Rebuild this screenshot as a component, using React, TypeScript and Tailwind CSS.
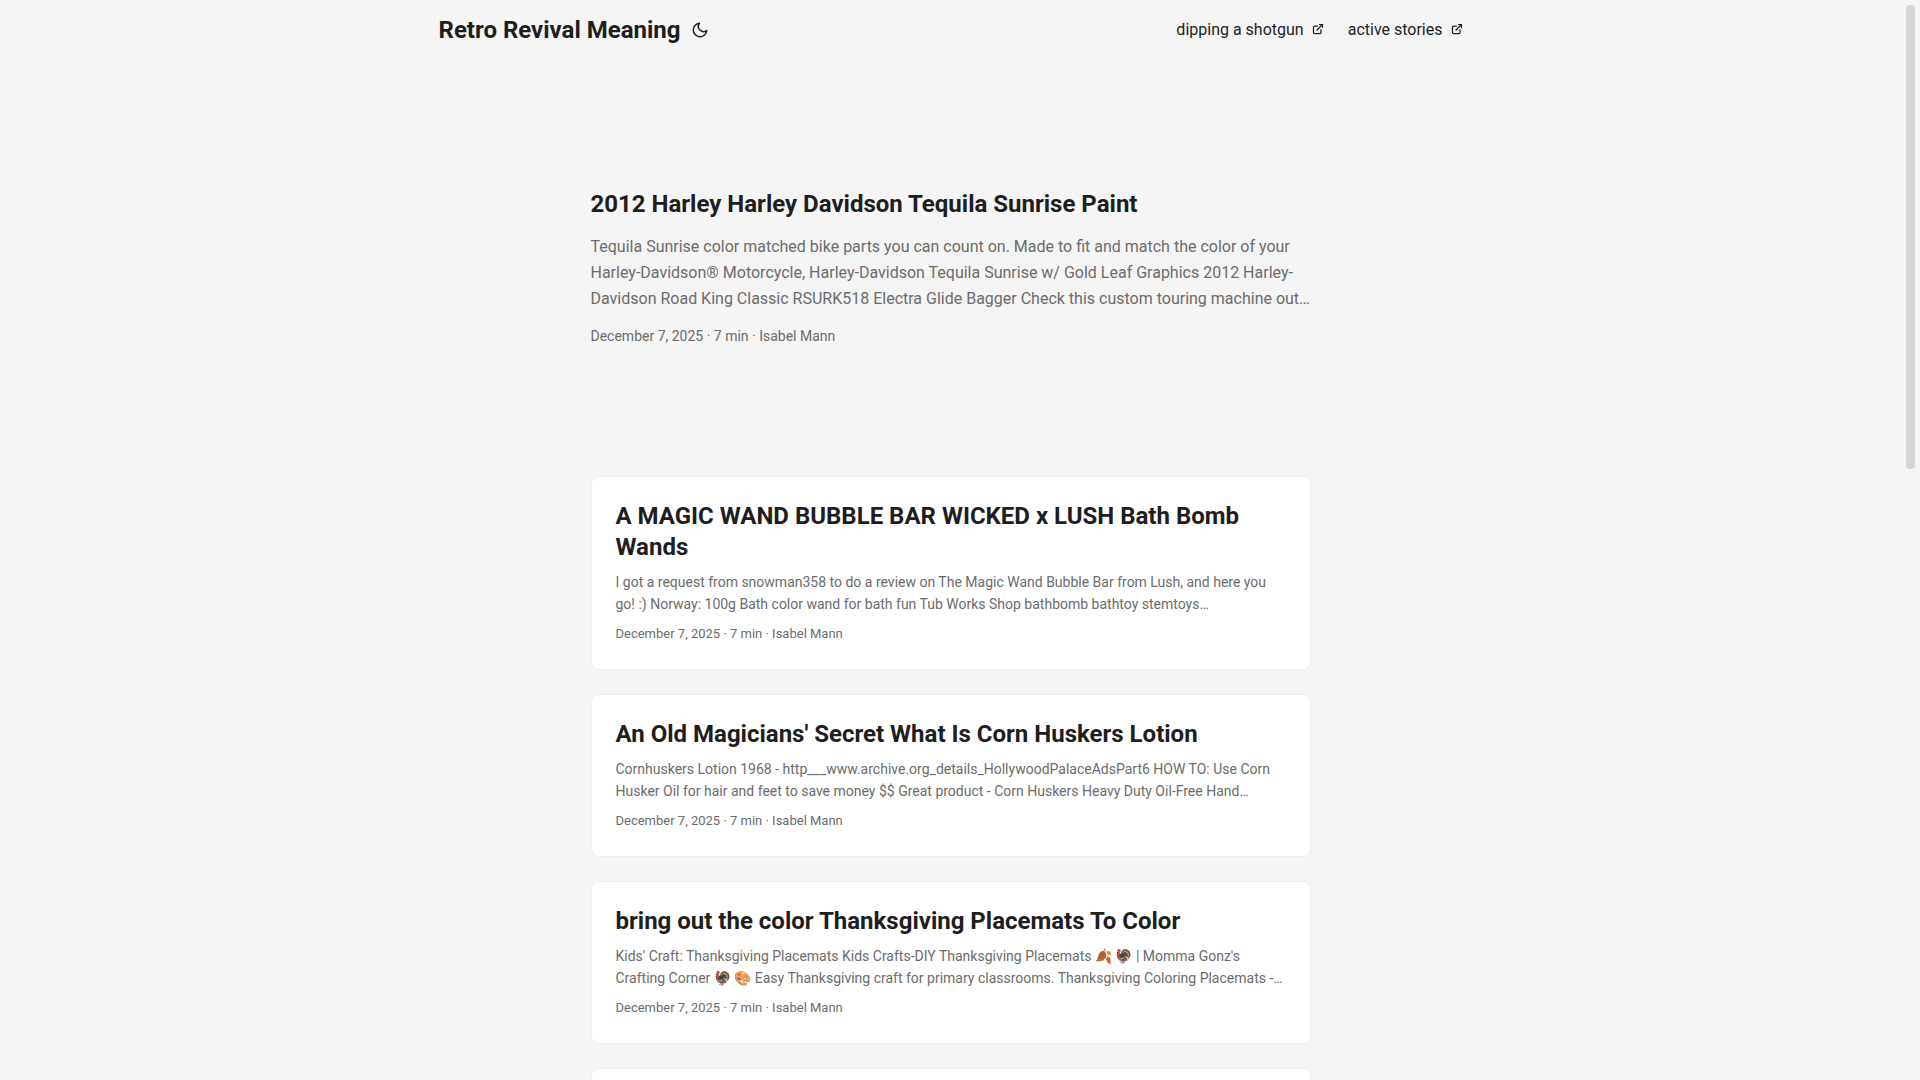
import React from "react";

const posts = [
  {
    title: "A MAGIC WAND BUBBLE BAR WICKED x LUSH Bath Bomb Wands",
    summary:
      "I got a request from snowman358 to do a review on The Magic Wand Bubble Bar from Lush, and here you go! :) Norway: 100g Bath color wand for bath fun Tub Works Shop bathbomb bathtoy stemtoys…",
  },
  {
    title: "An Old Magicians' Secret What Is Corn Huskers Lotion",
    summary:
      "Cornhuskers Lotion 1968 - http___www.archive.org_details_HollywoodPalaceAdsPart6 HOW TO: Use Corn Husker Oil for hair and feet to save money $$ Great product - Corn Huskers Heavy Duty Oil-Free Hand…",
  },
  {
    title: "bring out the color Thanksgiving Placemats To Color",
    summary:
      "Kids' Craft: Thanksgiving Placemats Kids Crafts-DIY Thanksgiving Placemats 🍂 🦃 | Momma Gonz's Crafting Corner 🦃 🎨 Easy Thanksgiving craft for primary classrooms. Thanksgiving Coloring Placemats -…",
  },
];

const menu = ["dipping a shotgun", "active stories"];

const meta = "December 7, 2025 · 7 min · Isabel Mann";

const MoonIcon = () => (
  <svg
    className="size-[18px]"
    viewBox="0 0 24 24"
    fill="none"
    stroke="currentColor"
    strokeWidth="2"
    strokeLinecap="round"
    strokeLinejoin="round"
  >
    <path d="M21 12.79A9 9 0 1 1 11.21 3 7 7 0 0 0 21 12.79z" />
  </svg>
);

const ExternalIcon = () => (
  <svg
    className="mb-0.5 size-3"
    viewBox="0 0 24 24"
    fill="none"
    stroke="currentColor"
    strokeWidth="2.5"
    strokeLinecap="round"
    strokeLinejoin="round"
  >
    <path d="M18 13v6a2 2 0 0 1-2 2H5a2 2 0 0 1-2-2V8a2 2 0 0 1 2-2h6" />
    <path d="M15 3h6v6" />
    <path d="M10 14L21 3" />
  </svg>
);

const Header = () => {
  return (
    <header>
      <nav className="mx-auto flex h-15 max-w-268 items-center justify-between px-6">
        <div className="flex items-center gap-2.5">
          <a href="#" className="text-2xl font-bold">
            Retro Revival Meaning
          </a>
          <button type="button" aria-label="Toggle theme" className="cursor-pointer">
            <MoonIcon />
          </button>
        </div>
        <ul className="flex gap-6">
          {menu.map((item) => (
            <li key={item}>
              <a href="#" className="flex items-center gap-2 text-base">
                {item}
                <ExternalIcon />
              </a>
            </li>
          ))}
        </ul>
      </nav>
    </header>
  );
};

const FirstEntry = () => {
  return (
    <article className="mt-6 mb-12 flex min-h-80 flex-col justify-center">
      <h1 className="text-2xl leading-[31px] font-bold">
        <a href="#">2012 Harley Harley Davidson Tequila Sunrise Paint</a>
      </h1>
      <p className="mt-3.5 mb-3 text-base leading-[26px] text-[#6c6c6c]">
        Tequila Sunrise color matched bike parts you can count on. Made to fit
        and match the color of your Harley-Davidson® Motorcycle, Harley-Davidson
        Tequila Sunrise w/ Gold Leaf Graphics 2012 Harley-Davidson Road King
        Classic RSURK518 Electra Glide Bagger Check this custom touring machine
        out…
      </p>
      <footer className="text-sm leading-6 text-[#6c6c6c]">{meta}</footer>
    </article>
  );
};

const App = () => {
  return (
    <div className="flex h-screen bg-[#f5f5f5] font-[Roboto,sans-serif] text-[#1e1e1e]">
      <div className="flex-1 overflow-hidden">
        <Header />
        <main className="mx-auto max-w-3xl p-6">
          <FirstEntry />
          {posts.map((post) => (
            <article
              key={post.title}
              className="mb-6 rounded-lg border border-[#eeeeee] bg-white p-6"
            >
              <h2 className="text-2xl leading-[31px] font-bold">
                <a href="#">{post.title}</a>
              </h2>
              <p className="my-2 text-sm leading-[22px] text-[#6c6c6c]">
                {post.summary}
              </p>
              <footer className="text-[13px] leading-[22px] text-[#6c6c6c]">
                {meta}
              </footer>
            </article>
          ))}
          <article className="h-40 rounded-lg border border-[#eeeeee] bg-white" />
        </main>
      </div>
      {/* Scrollbar */}
      <div className="w-[19px] p-[5px]">
        <div className="h-13/30 rounded-sm bg-[#d6d6d6]" />
      </div>
    </div>
  );
};

export default App;
